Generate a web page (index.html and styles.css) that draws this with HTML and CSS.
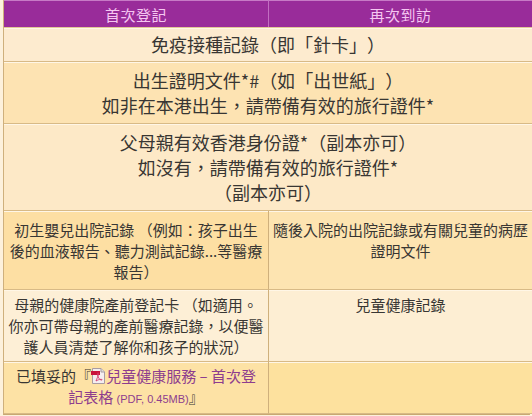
FILE: index.html
```html
<!DOCTYPE html>
<html lang="zh-Hant">
<head>
<meta charset="utf-8">
<link rel="stylesheet" href="styles.css">
</head>
<body>
<div class="sheet">
  <div class="head left">首次登記</div>
  <div class="head right">再次到訪</div>

  <div class="full r1"><div>免疫接種記錄（即「針卡」）</div></div>
  <div class="full r2"><div>出生證明文件*#（如「出世紙」）<br>如非在本港出生，請帶備有效的旅行證件*</div></div>
  <div class="full r3"><div>父母親有效香港身份證*（副本亦可）<br>如沒有，請帶備有效的旅行證件*<br>（副本亦可）</div></div>

  <div class="cell lc r4l"><div>初生嬰兒出院記錄 （例如：孩子出生<br>後的血液報告、聽力測試記錄...等醫療<br>報告）</div></div>
  <div class="cell rc r4r">隨後入院的出院記錄或有關兒童的病歷<br>證明文件</div>

  <div class="cell lc r5l"><div>母親的健康院產前登記卡 （如適用。<br>你亦可帶母親的產前醫療記錄，以便醫<br>護人員清楚了解你和孩子的狀況）</div></div>
  <div class="cell rc r5r">兒童健康記錄</div>

  <div class="cell lc r6l"><div>已填妥的『<svg class="pdf" viewBox="0 0 14 16" width="14" height="16"><path d="M1.5 0.5 H10 L13.5 4 V15.5 H1.5 Z" fill="#f4eef0" stroke="#a89ca2"/><path d="M10 0.5 V4 H13.5" fill="#ddd" stroke="#a89ca2"/><rect x="0" y="3" width="9" height="4" fill="#c8123a"/><path d="M5 13 C7 8 8 6 7.5 5 C7 4 6 5 6.8 8 C7.6 11 10 12.5 11 12 C12 11.5 9 10.5 5 13 Z" fill="none" stroke="#d43a6a" stroke-width="0.9"/></svg><span class="link">兒童健康服務 – 首次登</span><br><span class="link">記表格 <small>(PDF, 0.45MB)</small></span>』</div></div>
  <div class="cell rc r6r"></div>
</div>
</body>
</html>
```

FILE: styles.css
```css
html, body {
  margin: 0;
  padding: 0;
  background: #fdf1dc;
}
body {
  width: 532px;
  height: 416px;
  overflow: hidden;
  font-family: "Noto Sans CJK TC", "Noto Sans CJK SC", sans-serif;
  color: #383633;
  text-spacing-trim: space-all;
}
.sheet {
  margin: 0 2px 0 3px;
  display: grid;
  grid-template-columns: 265px 1fr;
  grid-template-rows: 27px 35px 62px 87px 79px 72px 52px;
  border-left: 1px solid #cfb07c;
  border-right: 1px solid #cfb07c;
  border-bottom: 1px solid #c9a872;
}
.head {
  background: #992c9a;
  color: #f5c6f1;
  font-size: 15px;
  line-height: 27px;
  text-align: center;
  border-top: 1px solid #c77ac6;
  box-sizing: border-box;
  letter-spacing: 0.5px;
}
.head.left {
  border-right: 1px solid #c26ec1;
}
.full {
  grid-column: 1 / 3;
  display: flex;
  align-items: center;
  justify-content: center;
  text-align: center;
  font-size: 18px;
  line-height: 25px;
  border-bottom: 1px solid #d8ba86;
  box-shadow: inset 0 1px 0 #fff6e6;
  box-sizing: border-box;
}
.r1 { background: #fdebcf; border-top: 1px solid #e2c896; }
.r2 { background: #fde3b2; }
.r3 { background: #fde9c7; }
.cell {
  font-size: 15px;
  line-height: 21px;
  border-bottom: 1px solid #d8ba86;
  box-shadow: inset 0 1px 0 #fff6e6;
  box-sizing: border-box;
  white-space: nowrap;
  text-align: center;
}
.lc {
  display: flex;
  align-items: center;
  justify-content: center;
  border-right: 1px solid #cfb07c;
  padding: 0 3px;
}
.rc {
  padding: 0 4px;
}
.r4l { background: #fddfa3; }
.r4r { background: #fde4b1; padding-top: 8px; }
.r5l { background: #fdefd6; }
.r5r { background: #fdeed3; padding-top: 4px; }
.r6l { background: #fde2a5; }
.r6r { background: #fde19e; }
.pdf {
  vertical-align: -2px;
  margin: 0 1px 0 0;
}
.link {
  color: #8d3d8e;
}
.link small {
  font-family: "Liberation Sans", Arial, sans-serif;
  font-size: 11px;
}
```
